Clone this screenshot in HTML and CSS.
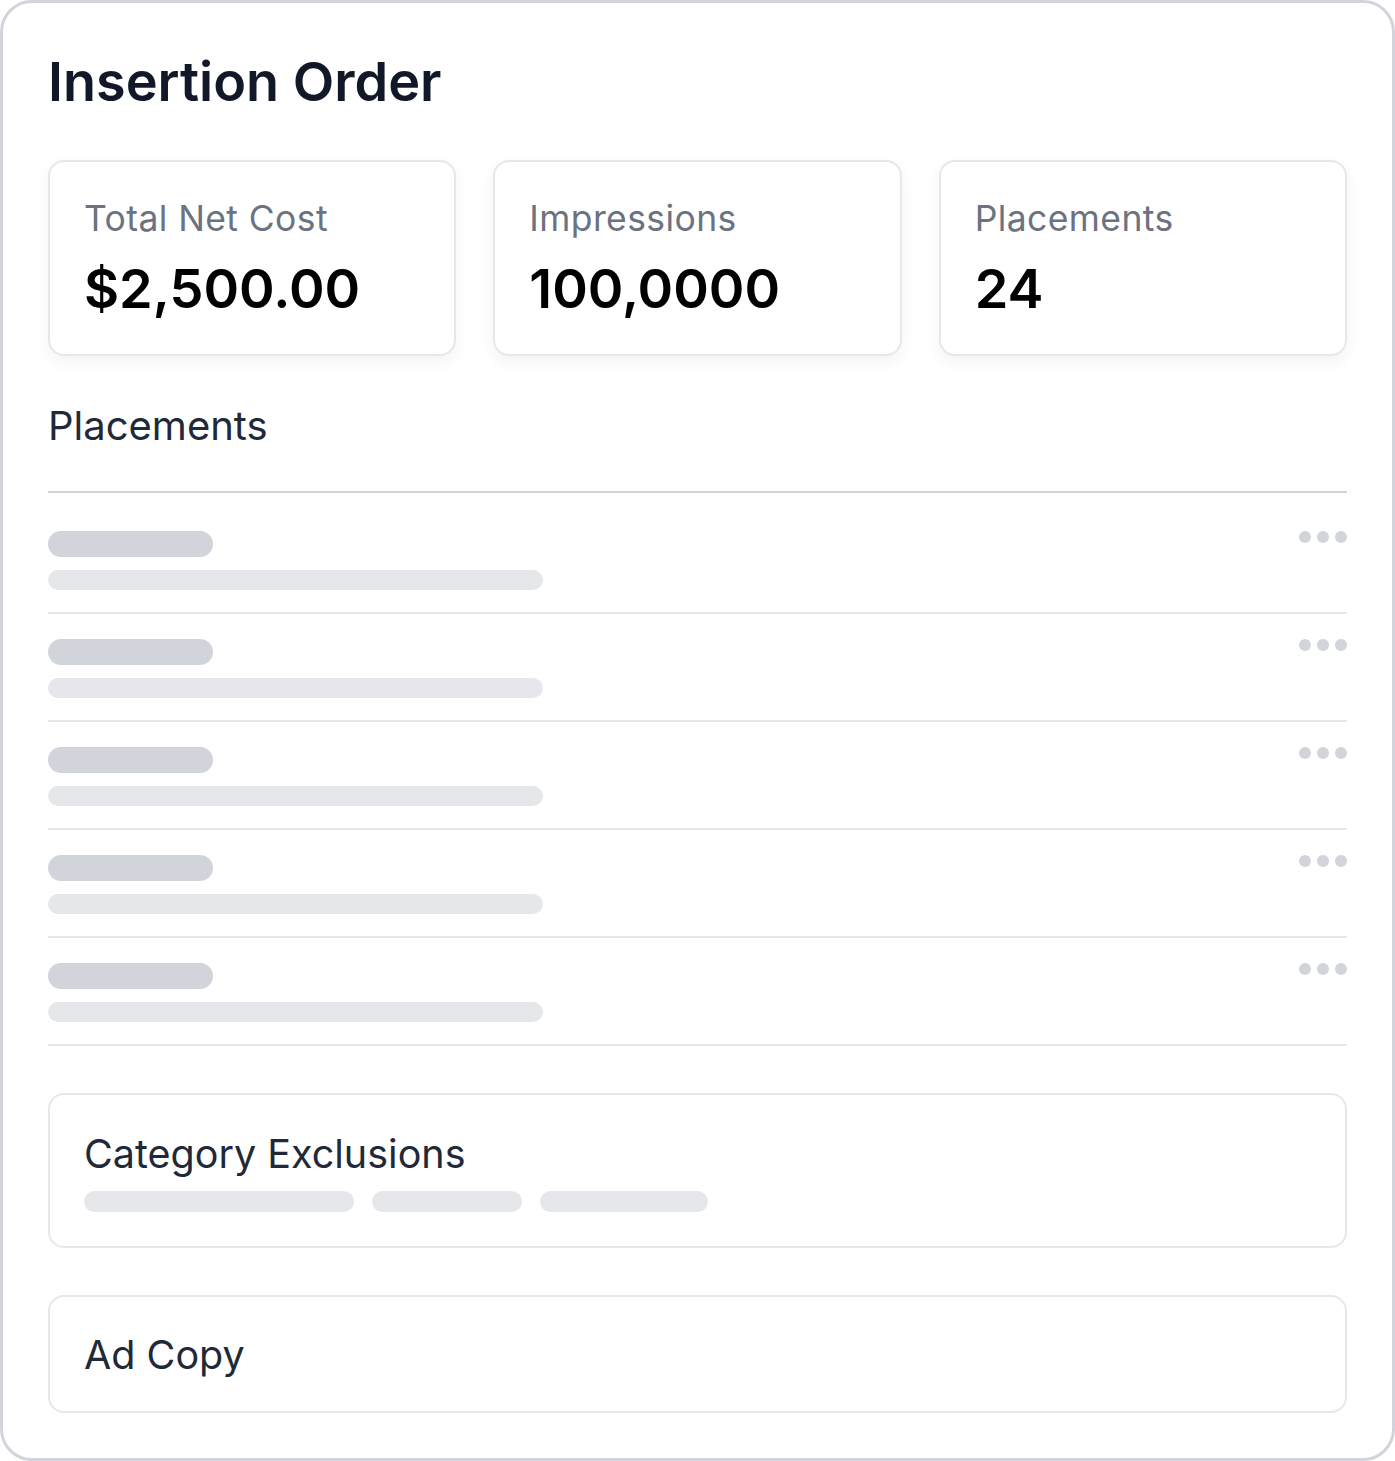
FILE: index.html
```html
<!DOCTYPE html>
<html lang="en">
<head>
  <meta charset="UTF-8">
  <meta name="viewport" content="width=device-width, initial-scale=1.0">
  <title>Insertion Order</title>
  <link rel="stylesheet" href="styles.css">
</head>
<body>
  <div class="order">
    <h1>Insertion Order</h1>

    <div class="stats">
      <div class="stat">
        <div class="stat-label">Total Net Cost</div>
        <div class="stat-value">$2,500.00</div>
      </div>
      <div class="stat">
        <div class="stat-label">Impressions</div>
        <div class="stat-value">100,0000</div>
      </div>
      <div class="stat">
        <div class="stat-label">Placements</div>
        <div class="stat-value">24</div>
      </div>
    </div>

    <h2>Placements</h2>
    <div class="placements" id="placement-list">
      <!-- rows filled in below -->
    </div>

    <div class="panel">
      <h3>Category Exclusions</h3>
      <div class="tags">
        <span class="tag" style="width: 270px"></span>
        <span class="tag" style="width: 150px"></span>
        <span class="tag" style="width: 168px"></span>
      </div>
    </div>

    <div class="panel">
      <h3>Ad Copy</h3>
    </div>
  </div>

  <script>
    const list = document.getElementById("placement-list");
    for (let i = 0; i < 5; i++) {
      list.innerHTML += `<div class="row">
        <div class="row-text">
          <div class="line line-title"></div>
          <div class="line line-sub"></div>
        </div>
        <div class="more"><span></span><span></span><span></span></div>
      </div>`;
    }
  </script>
</body>
</html>
```

FILE: styles.css
```css
body {
  margin: 0;
  background: #fff;
  font-family: Inter, "Noto Sans", Arial, sans-serif;
}
.order {
  box-sizing: border-box;
  width: 1395px;
  height: 1461px;
  border: 3px solid #d1d5db;
  border-radius: 32px;
  padding: 47px 45px 46px;
  background: #fff;
}
h1 {
  margin: 0;
  font-size: 54px;
  line-height: 64px;
  font-weight: 600;
  color: #111827;
}
.stats {
  display: grid;
  grid-template-columns: repeat(3, 1fr);
  gap: 37px;
  margin-top: 46px;
}
.stat {
  border: 2px solid #e5e7eb;
  border-radius: 16px;
  padding: 38px 34px 35px;
  background: #fff;
  box-shadow: 0 6px 16px rgba(0,0,0,0.05);
}
.stat-label {
  font-size: 35.5px;
  line-height: 38px;
  letter-spacing: 0.4px;
  color: #6b7280;
}
.stat-value {
  margin-top: 21px;
  font-size: 54px;
  line-height: 60px;
  font-weight: 600;
  color: #000;
}
h2 {
  margin: 46px 0 0;
  font-size: 40px;
  line-height: 48px;
  font-weight: 400;
  color: #1f2937;
}
.placements {
  margin-top: 41px;
  border-top: 2px solid #d1d5db;
  padding-top: 13px;
}
.row {
  display: flex;
  justify-content: space-between;
  align-items: flex-start;
  padding: 25px 0 22px;
  border-bottom: 2px solid #e5e7eb;
}
.line {
  border-radius: 13px;
}
.line-title {
  width: 165px;
  height: 26px;
  background: #d1d5db;
}
.line-sub {
  width: 495px;
  height: 20px;
  margin-top: 13px;
  background: #e5e7eb;
  border-radius: 10px;
}
.more {
  display: flex;
  gap: 6px;
}
.more span {
  width: 12px;
  height: 12px;
  border-radius: 50%;
  background: #d1d5db;
}
.panel {
  margin-top: 47px;
  border: 2px solid #e5e7eb;
  border-radius: 16px;
  padding: 35px 35px 34px 34px;
}
.panel + .panel {
  margin-top: 47px;
  padding-top: 34px;
  padding-bottom: 32px;
}
h3 {
  margin: 0;
  font-size: 39.5px;
  line-height: 48px;
  font-weight: 400;
  color: #1f2937;
}
.tags {
  display: flex;
  gap: 18px;
  margin-top: 13px;
}
.tag {
  height: 21px;
  border-radius: 11px;
  background: #e5e7eb;
}
```
